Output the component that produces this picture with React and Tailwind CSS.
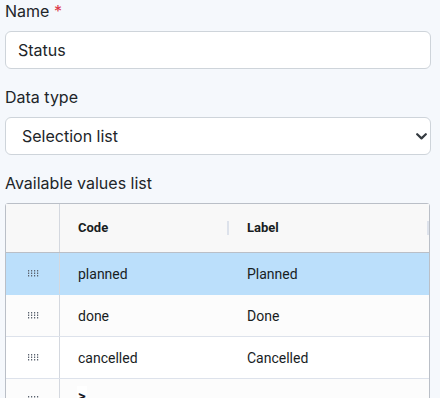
import React from "react";

const rows = [
  { code: "planned", label: "Planned", selected: true },
  { code: "done", label: "Done" },
  { code: "cancelled", label: "Cancelled" },
  { code: ">", label: "", editing: true },
];

const DragHandle = () => (
  <svg width="11" height="7" viewBox="0 0 11 7" className="block">
    {[0, 3, 6, 9].map((x) =>
      [0, 2.5, 5].map((y) => (
        <rect key={`${x}-${y}`} x={x} y={y} width="1.2" height="1.5" fill="#5c6470" />
      ))
    )}
  </svg>
);

const Field = ({ label, required, children }) => (
  <div className="mb-4">
    <div className="h-6 mb-2 text-[16px] leading-6 text-[#212529]">
      {label}
      {required && <span className="text-[#dc3545]"> *</span>}
    </div>
    {children}
  </div>
);

export default function App() {
  return (
    <div
      className="h-[399px] overflow-hidden bg-[#f5f8fc] pl-[5px] pr-[9px] pt-0 -mt-px"
      style={{ fontFamily: "Inter, 'Liberation Sans', sans-serif" }}
    >
      <Field label="Name" required>
        <input
          defaultValue="Status"
          className="block w-full h-[38px] rounded-[6px] border border-[#ced4da] bg-white px-3 text-[16px] text-[#212529] outline-none"
        />
      </Field>

      <Field label="Data type">
        <div className="relative">
          <select
            defaultValue="list"
            className="block w-full h-[38px] appearance-none rounded-[6px] border border-[#ced4da] bg-white pl-4 pr-9 text-[16px] text-[#212529] outline-none"
          >
            <option value="list">Selection list</option>
          </select>
          <svg
            width="11"
            height="7"
            viewBox="0 0 11 7"
            className="pointer-events-none absolute right-[4px] top-[16px]"
          >
            <path d="M1.2 1.2 5.5 5.4 9.8 1.2" fill="none" stroke="#343a40" strokeWidth="2.2" strokeLinecap="round" strokeLinejoin="round" />
          </svg>
        </div>
      </Field>

      <div className="h-6 mb-2 text-[16px] leading-6 text-[#212529]">
        Available values list
      </div>

      <div
        className="rounded-t-[3px] border border-[#babfc7] bg-white text-[#181d1f] mr-[1px]"
        style={{ fontFamily: "Roboto, 'Noto Sans', sans-serif" }}
      >
        <div className="flex h-[49px] border-b border-[#babfc7] bg-[#f8f8f8] text-[13px] font-bold">
          <div className="w-[54px] border-r border-[#d4d8df]" />
          <div className="relative flex w-[169px] items-center pl-[18px]">
            Code
            <span className="absolute right-0 top-[17px] h-[14px] w-[2px] bg-[#dde2eb]" />
          </div>
          <div className="relative flex flex-1 items-center pl-[18px]">
            Label
            <span className="absolute right-0 top-[17px] h-[14px] w-[2px] bg-[#dde2eb]" />
          </div>
        </div>
        {rows.map((r, i) => (
          <div
            key={r.code}
            className={`flex h-[42px] border-b text-[14px] ${
              r.selected
                ? "bg-[#bbdffb] border-[#bbdffb]"
                : i % 2 === 1
                ? "bg-[#fcfcfc] border-[#dde2eb]"
                : "bg-white border-[#dde2eb]"
            }`}
          >
            <div className="flex w-[54px] items-center justify-center border-r border-[#d4d8df] pl-[1px]">
              <DragHandle />
            </div>
            {r.editing ? (
              <div className="flex w-[169px] items-start pl-[17px] pt-[7px]">
                <span className="bg-white px-px text-[15px] font-bold leading-5">{r.code}</span>
              </div>
            ) : (
              <div className="flex w-[169px] items-center pl-[18px] pt-[2px]">{r.code}</div>
            )}
            <div className="flex flex-1 items-center pl-[18px] pt-[2px]">{r.label}</div>
          </div>
        ))}
      </div>
    </div>
  );
}
